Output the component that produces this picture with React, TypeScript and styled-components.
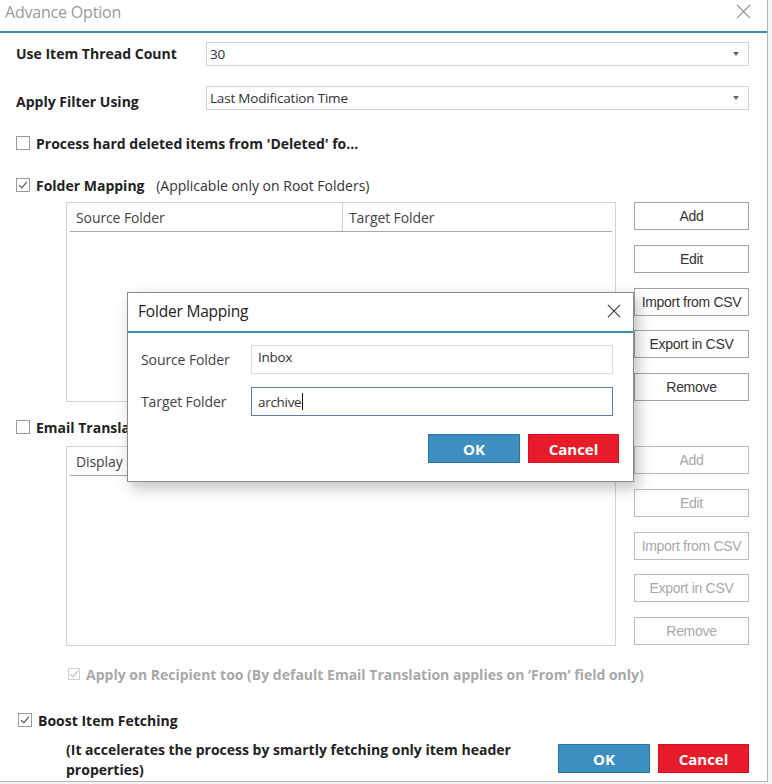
import React from 'react';
import styled, { createGlobalStyle } from 'styled-components';

const GlobalStyle = createGlobalStyle`
  html, body {
    margin: 0;
    padding: 0;
    background: #f4f4f4;
  }
  body {
    font-family: 'Open Sans', 'Liberation Sans', sans-serif;
    color: #333;
  }
`;

const Dialog = styled.div`
  position: relative;
  width: 767px;
  height: 781px;
  background: #fff;
  border-right: 1px solid #b4b4b4;
  border-bottom: 1px solid #b4b4b4;
  display: flex;
  flex-direction: column;
`;

const Header = styled.div`
  height: 31px;
  box-sizing: border-box;
  border-bottom: 2px solid #3a8fb7;
  display: flex;
  align-items: flex-start;
  justify-content: space-between;
  padding: 1px 16px 0 5px;
  height: 33px;
`;

const Title = styled.div`
  font-size: 16px;
  color: #9a9a9a;
  letter-spacing: -0.2px;
`;

const CloseBox = styled.div<{ top: number }>`
  padding-top: ${(p) => p.top}px;
  display: flex;
`;

const CloseIcon = ({ color, size }: { color: string; size: number }) => (
  <svg width={size} height={size} viewBox="0 0 16 16">
    <path d="M1 1 L15 15 M15 1 L1 15" stroke={color} strokeWidth="1.2" fill="none" />
  </svg>
);

const Body = styled.div`
  padding: 0 18px 0 16px;
  display: flex;
  flex-direction: column;
`;

const SelectRow = styled.div<{ top: number }>`
  display: flex;
  margin-top: ${(p) => p.top}px;
  height: 24px;
`;

const Label = styled.div<{ drop?: number }>`
  width: 190px;
  font-weight: 700;
  font-size: 14px;
  color: #222;
  padding-top: ${(p) => p.drop ?? 2}px;
  white-space: nowrap;
`;

const Select = styled.div`
  flex: 1;
  border: 1px solid #d2d2d2;
  display: flex;
  align-items: center;
  justify-content: space-between;
  padding: 0 9px 0 3px;
  font-size: 13.5px;
  color: #333;
  letter-spacing: -0.2px;
`;

const Arrow = styled.span`
  width: 0;
  height: 0;
  border-left: 3px solid transparent;
  border-right: 3px solid transparent;
  border-top: 4px solid #666;
`;

const CheckRow = styled.div<{ top: number; indent?: number }>`
  display: flex;
  align-items: center;
  height: 16px;
  margin-top: ${(p) => p.top}px;
  margin-left: ${(p) => p.indent ?? 0}px;
  gap: 6px;
`;

const Box = styled.span<{ small?: boolean; faded?: boolean }>`
  width: ${(p) => (p.small ? 12 : 14)}px;
  height: ${(p) => (p.small ? 12 : 14)}px;
  box-sizing: border-box;
  border: 1px solid ${(p) => (p.faded ? '#d0d0d0' : '#9a9a9a')};
  background: #fff;
  display: flex;
  align-items: center;
  justify-content: center;
`;

const CheckText = styled.span<{ faded?: boolean }>`
  font-weight: 700;
  font-size: 14px;
  color: ${(p) => (p.faded ? '#a8a8a8' : '#222')};
  white-space: nowrap;
`;

const Note = styled.span`
  font-weight: 400;
  font-size: 14px;
  color: #333;
  margin-left: 8px;
`;

const Checkbox = ({
  checked,
  small,
  faded,
}: {
  checked?: boolean;
  small?: boolean;
  faded?: boolean;
}) => (
  <Box small={small} faded={faded}>
    {checked && (
      <svg width="10" height="10" viewBox="0 0 10 10">
        <path
          d="M1.2 5.2 L3.8 7.8 L8.8 1.8"
          stroke={faded ? '#bdbdbd' : '#555'}
          strokeWidth="1.2"
          fill="none"
        />
      </svg>
    )}
  </Box>
);

const Section = styled.div<{ top: number }>`
  display: flex;
  margin-top: ${(p) => p.top}px;
  margin-left: 50px;
  gap: 18px;
`;

const Table = styled.div`
  width: 550px;
  height: 200px;
  box-sizing: border-box;
  border: 1px solid #d4d4d4;
  padding: 0 3px;
`;

const HeaderRow = styled.div`
  display: flex;
  height: 28px;
  border-bottom: 1px solid #a8a8a8;
`;

const HeaderCell = styled.div<{ width?: number }>`
  ${(p) => (p.width ? `width: ${p.width}px;` : 'flex: 1;')}
  box-sizing: border-box;
  padding-left: 6px;
  display: flex;
  align-items: center;
  font-size: 14px;
  color: #444;
  letter-spacing: -0.1px;
  & + & {
    border-left: 1px solid #d0d0d0;
  }
`;

const ButtonColumn = styled.div`
  display: flex;
  flex-direction: column;
  gap: 14.75px;
`;

const SideButton = styled.div<{ disabled?: boolean }>`
  width: 115px;
  height: 28px;
  box-sizing: border-box;
  border: 1px solid ${(p) => (p.disabled ? '#bcbcbc' : '#a4a4a4')};
  display: flex;
  align-items: center;
  justify-content: center;
  font-size: 14px;
  letter-spacing: -0.3px;
  color: ${(p) => (p.disabled ? '#a8a8a8' : '#333')};
  font-family: 'Liberation Sans', 'Open Sans', sans-serif;
`;

const Footer = styled.div`
  display: flex;
  margin-top: 12px;
  margin-left: 50px;
  justify-content: space-between;
`;

const FooterText = styled.div`
  font-weight: 700;
  font-size: 14px;
  line-height: 20px;
  color: #222;
`;

const ButtonPair = styled.div<{ top: number }>`
  display: flex;
  gap: 8px;
  margin-top: ${(p) => p.top}px;
`;

const ActionButton = styled.div<{ kind: 'ok' | 'cancel' }>`
  width: ${(p) => (p.kind === 'ok' ? 92 : 91)}px;
  height: 29px;
  box-sizing: border-box;
  background: ${(p) => (p.kind === 'ok' ? '#3d8ec1' : '#e81b2b')};
  border: 1px solid ${(p) => (p.kind === 'ok' ? '#2d72a6' : '#d8101f')};
  color: #fff;
  font-weight: 700;
  font-size: 15px;
  display: flex;
  align-items: center;
  justify-content: center;
`;

const Modal = styled.div`
  position: absolute;
  left: 127px;
  top: 292px;
  width: 507px;
  height: 190px;
  box-sizing: border-box;
  background: #fff;
  border: 1px solid #8c8c8c;
  box-shadow: 4px 6px 14px rgba(0, 0, 0, 0.25);
  display: flex;
  flex-direction: column;
`;

const ModalHeader = styled.div`
  height: 40px;
  box-sizing: border-box;
  border-bottom: 2px solid #3a8fb7;
  display: flex;
  align-items: center;
  justify-content: space-between;
  padding: 0 12px 2px 10px;
`;

const ModalTitle = styled.div`
  font-size: 15.5px;
  color: #222;
  letter-spacing: -0.2px;
`;

const ModalBody = styled.div`
  padding: 12px 14px 0 13px;
  display: flex;
  flex-direction: column;
`;

const FieldRow = styled.div<{ top: number }>`
  display: flex;
  align-items: center;
  margin-top: ${(p) => p.top}px;
`;

const FieldLabel = styled.div`
  width: 110px;
  font-size: 14px;
  color: #444;
  letter-spacing: -0.1px;
`;

const Input = styled.div<{ focused?: boolean }>`
  width: 362px;
  height: 29px;
  box-sizing: border-box;
  border: 1px solid ${(p) => (p.focused ? '#5b7ea6' : '#dcdcdc')};
  padding: ${(p) => (p.focused ? '4px 6px' : '2px 6px')};
  font-size: 13.5px;
  letter-spacing: -0.3px;
  color: #333;
  display: flex;
  align-items: ${(p) => (p.focused ? 'center' : 'flex-start')};
`;

const Caret = styled.span`
  display: inline-block;
  width: 1px;
  height: 17px;
  background: #111;
  margin-left: 1px;
`;

const ModalButtons = styled.div`
  display: flex;
  justify-content: flex-end;
  gap: 8px;
  margin-top: 18px;
`;

const App = () => {
  const mappingButtons = ['Add', 'Edit', 'Import from CSV', 'Export in CSV', 'Remove'];

  return (
    <>
      <GlobalStyle />
      <Dialog>
        <Header>
          <Title>Advance Option</Title>
          <CloseBox top={3}>
            <CloseIcon color="#8a8a8a" size={15} />
          </CloseBox>
        </Header>
        <Body>
          <SelectRow top={9}>
            <Label>Use Item Thread Count</Label>
            <Select>
              30
              <Arrow />
            </Select>
          </SelectRow>
          <SelectRow top={20}>
            <Label drop={6}>Apply Filter Using</Label>
            <Select>
              Last Modification Time
              <Arrow />
            </Select>
          </SelectRow>

          <CheckRow top={25}>
            <Checkbox />
            <CheckText>Process hard deleted items from 'Deleted' fo...</CheckText>
          </CheckRow>
          <CheckRow top={26}>
            <Checkbox checked />
            <CheckText>
              Folder Mapping
              <Note> (Applicable only on Root Folders)</Note>
            </CheckText>
          </CheckRow>

          <Section top={9}>
            <Table>
              <HeaderRow>
                <HeaderCell width={272}>Source Folder</HeaderCell>
                <HeaderCell>Target Folder</HeaderCell>
              </HeaderRow>
            </Table>
            <ButtonColumn>
              {mappingButtons.map((b) => (
                <SideButton key={b}>{b}</SideButton>
              ))}
            </ButtonColumn>
          </Section>

          <CheckRow top={17}>
            <Checkbox />
            <CheckText>Email Translation</CheckText>
          </CheckRow>

          <Section top={11}>
            <Table>
              <HeaderRow>
                <HeaderCell width={272}>Display Name</HeaderCell>
                <HeaderCell>Email Address</HeaderCell>
              </HeaderRow>
            </Table>
            <ButtonColumn>
              {mappingButtons.map((b) => (
                <SideButton key={b} disabled>
                  {b}
                </SideButton>
              ))}
            </ButtonColumn>
          </Section>

          <CheckRow top={20} indent={52}>
            <Checkbox checked small faded />
            <CheckText faded>
              Apply on Recipient too (By default Email Translation applies on ‘From’ field only)
            </CheckText>
          </CheckRow>

          <CheckRow top={30} indent={2}>
            <Checkbox checked />
            <CheckText>Boost Item Fetching</CheckText>
          </CheckRow>

          <Footer>
            <FooterText>
              (It accelerates the process by smartly fetching only item header
              <br />
              properties)
            </FooterText>
            <ButtonPair top={4}>
              <ActionButton kind="ok">OK</ActionButton>
              <ActionButton kind="cancel">Cancel</ActionButton>
            </ButtonPair>
          </Footer>
        </Body>

        <Modal>
          <ModalHeader>
            <ModalTitle>Folder Mapping</ModalTitle>
            <CloseIcon color="#333" size={14} />
          </ModalHeader>
          <ModalBody>
            <FieldRow top={0}>
              <FieldLabel>Source Folder</FieldLabel>
              <Input>Inbox</Input>
            </FieldRow>
            <FieldRow top={13}>
              <FieldLabel>Target Folder</FieldLabel>
              <Input focused>
                archive
                <Caret />
              </Input>
            </FieldRow>
            <ModalButtons>
              <ActionButton kind="ok">OK</ActionButton>
              <ActionButton kind="cancel">Cancel</ActionButton>
            </ModalButtons>
          </ModalBody>
        </Modal>
      </Dialog>
    </>
  );
};

export default App;
